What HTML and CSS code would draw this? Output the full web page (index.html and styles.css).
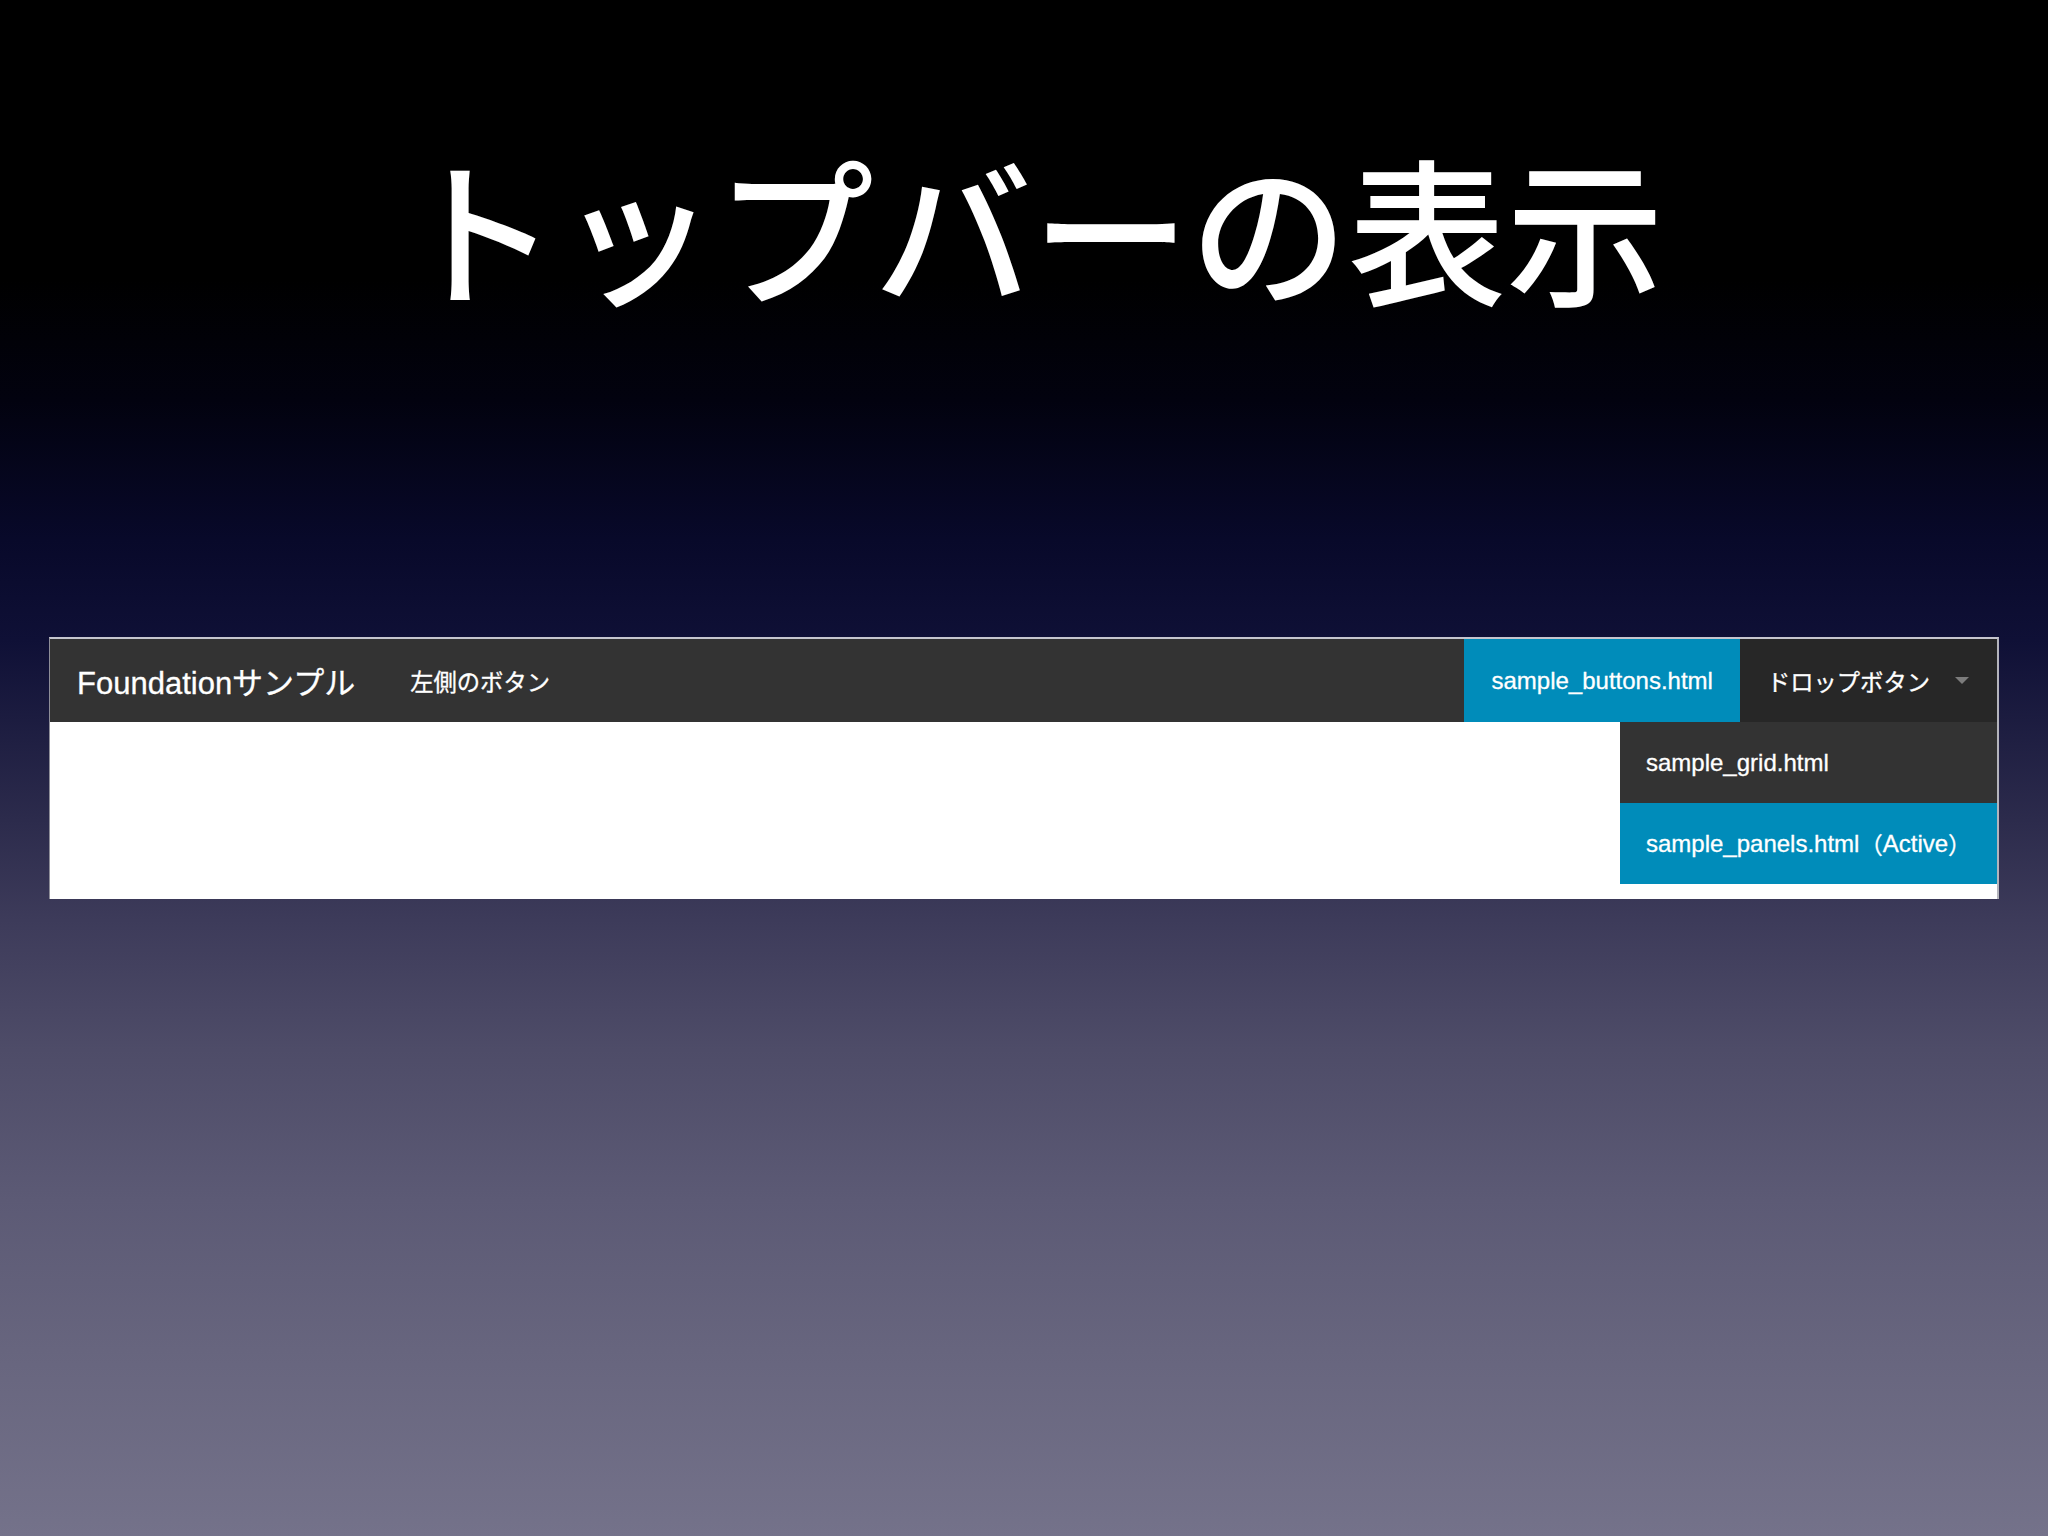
FILE: index.html
```html
<!DOCTYPE html>
<html lang="ja">
<head>
<meta charset="utf-8">
<title>トップバーの表示</title>
<link rel="stylesheet" href="styles.css">
</head>
<body>
<div class="slide">
  <h1 class="title">トップバーの表示</h1>
  <div class="frame">
    <nav class="topbar">
      <div class="left">
        <span class="brand">Foundationサンプル</span>
        <span class="nav-item"><span class="ja">左側のボタン</span></span>
      </div>
      <div class="right">
        <span class="nav-item active">sample_buttons.html</span>
        <div class="has-dropdown">
          <span class="nav-item dd-toggle"><span class="ja">ドロップボタン</span><span class="arrow"></span></span>
          <ul class="dropdown">
            <li class="dd-item">sample_grid.html</li>
            <li class="dd-item active">sample_panels.html<span class="ja">（</span>Active<span class="ja">）</span></li>
          </ul>
        </div>
      </div>
    </nav>
    <div class="content"></div>
  </div>
</div>
</body>
</html>
```

FILE: styles.css
```css
html, body {
  margin: 0;
  padding: 0;
}
body {
  width: 2048px;
  height: 1536px;
  overflow: hidden;
  background: linear-gradient(to bottom,
    #000000 0px,
    #000000 280px,
    #02020f 400px,
    #08092a 540px,
    #0f1036 640px,
    #2c2b4c 820px,
    #3d3b5a 920px,
    #4e4c68 1050px,
    #5c5a75 1200px,
    #67657e 1350px,
    #74728a 1536px);
  font-family: "Liberation Sans", "Noto Sans CJK JP", sans-serif;
}
.slide {
  display: flex;
  flex-direction: column;
  align-items: center;
}
.title {
  margin: 147px 0 0 16px;
  font-family: "Noto Sans CJK JP", sans-serif;
  font-weight: 500;
  font-size: 158px;
  line-height: 158px;
  color: #ffffff;
  letter-spacing: 0;
}
.frame {
  align-self: flex-start;
  margin: 332px 0 0 49px;
  width: 1947px;
  border-top: 2px solid #c6c6ce;
  border-left: 1px solid #8e8e98;
  border-right: 2px solid #b4b4bc;
  background: #ffffff;
}
.topbar {
  height: 83px;
  background: #333333;
  display: flex;
  justify-content: space-between;
  align-items: stretch;
  position: relative;
  -webkit-text-stroke: 0.3px #ffffff;
}
.left, .right {
  display: flex;
  align-items: stretch;
}
.brand {
  display: flex;
  align-items: center;
  padding: 0 28px 0 27px;
  font-size: 31px;
  color: #ffffff;
  white-space: nowrap;
}
.nav-item {
  display: flex;
  align-items: center;
  padding: 0 27px;
  font-size: 24px;
  color: #ffffff;
  white-space: nowrap;
}
.ja {
  font-size: 23.3px;
}
.nav-item.active {
  background: #008cba;
}
.has-dropdown {
  position: relative;
  display: flex;
  background: #272727;
}
.dd-toggle {
  padding-right: 28px;
}
.arrow {
  display: inline-block;
  width: 0;
  height: 0;
  margin-left: 25px;
  border-left: 7px solid transparent;
  border-right: 7px solid transparent;
  border-top: 7px solid #7c7c7c;
}
.dropdown {
  position: absolute;
  top: 100%;
  right: 0;
  width: 377px;
  margin: 0;
  padding: 0;
  list-style: none;
  z-index: 2;
}
.dd-item {
  height: 81px;
  display: flex;
  align-items: center;
  padding: 0 26px;
  background: #333333;
  color: #ffffff;
  font-size: 24px;
  white-space: nowrap;
}
.dd-item.active {
  background: #008cba;
}
.content {
  height: 177px;
  background: #ffffff;
}
```
